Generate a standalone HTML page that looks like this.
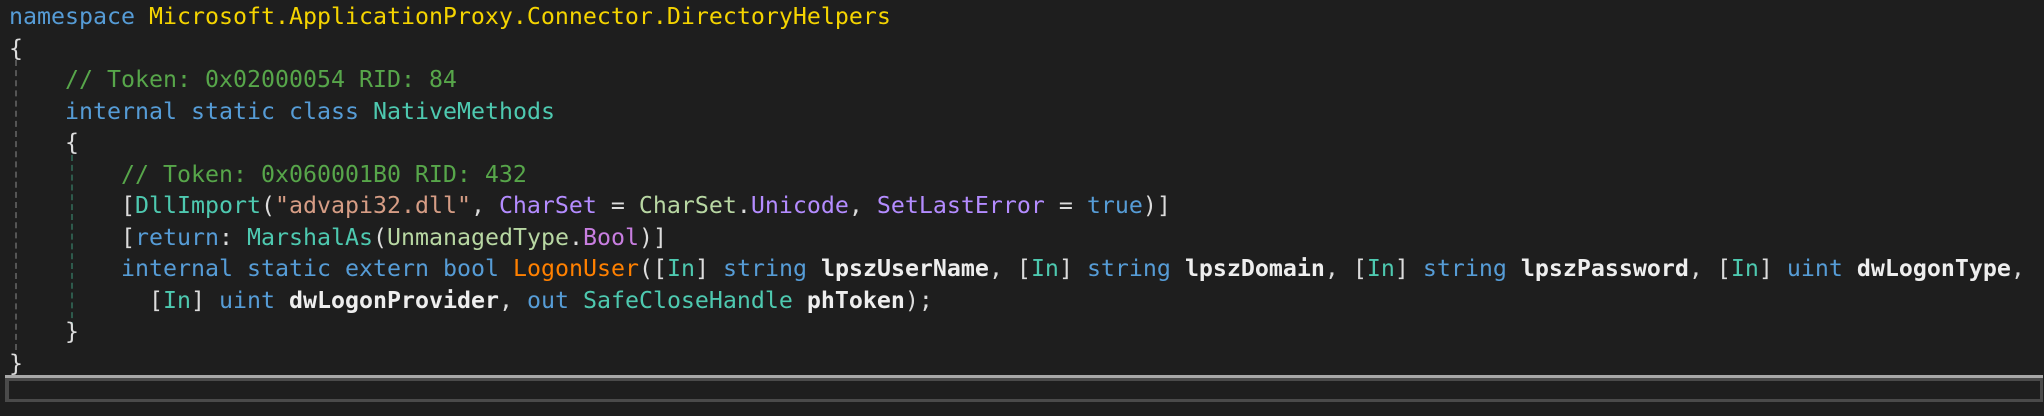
<!DOCTYPE html>
<html><head><meta charset="utf-8"><style>
html,body{margin:0;padding:0;background:#1e1e1e;width:2044px;height:416px;overflow:hidden;position:relative}
pre{position:absolute;left:9px;top:1px;margin:0;font-family:"DejaVu Sans Mono","Liberation Mono",monospace;font-size:23.25px;line-height:31.5px;color:#dcdcdc;white-space:pre}
.k{color:#569cd6}.ns{color:#f5d400}.c{color:#57a64a}.t{color:#4ec9b0}.s{color:#d69d85}.p{color:#b48cff}.e{color:#b8d7a3}.m{color:#ff8000}.b{font-weight:bold;color:#eeeeee}.v{color:#c87ee0}
.g{position:absolute;width:0;border-left:2px dashed #555}
.g2{border-left-color:#2e5a4c}
.box{position:absolute;left:5px;top:378px;width:2031px;height:18px;border:3px solid #4a4a4a;border-left-width:4px;box-shadow:0 -3px 0 #a8a8a8}
</style></head><body>
<div class="g" style="left:15px;top:60px;height:290px"></div>
<div class="g g2" style="left:71px;top:155px;height:173px"></div>
<pre><span class="k">namespace</span> <span class="ns">Microsoft.ApplicationProxy.Connector.DirectoryHelpers</span>
{
    <span class="c">// Token: 0x02000054 RID: 84</span>
    <span class="k">internal</span> <span class="k">static</span> <span class="k">class</span> <span class="t">NativeMethods</span>
    {
        <span class="c">// Token: 0x060001B0 RID: 432</span>
        [<span class="t">DllImport</span>(<span class="s">"advapi32.dll"</span>, <span class="p">CharSet</span> = <span class="e">CharSet</span>.<span class="p">Unicode</span>, <span class="p">SetLastError</span> = <span class="k">true</span>)]
        [<span class="k">return</span>: <span class="t">MarshalAs</span>(<span class="e">UnmanagedType</span>.<span class="v">Bool</span>)]
        <span class="k">internal</span> <span class="k">static</span> <span class="k">extern</span> <span class="k">bool</span> <span class="m">LogonUser</span>([<span class="t">In</span>] <span class="k">string</span> <span class="b">lpszUserName</span>, [<span class="t">In</span>] <span class="k">string</span> <span class="b">lpszDomain</span>, [<span class="t">In</span>] <span class="k">string</span> <span class="b">lpszPassword</span>, [<span class="t">In</span>] <span class="k">uint</span> <span class="b">dwLogonType</span>,
          [<span class="t">In</span>] <span class="k">uint</span> <span class="b">dwLogonProvider</span>, <span class="k">out</span> <span class="t">SafeCloseHandle</span> <span class="b">phToken</span>);
    }
}</pre>
<div class="box"></div>
</body></html>
